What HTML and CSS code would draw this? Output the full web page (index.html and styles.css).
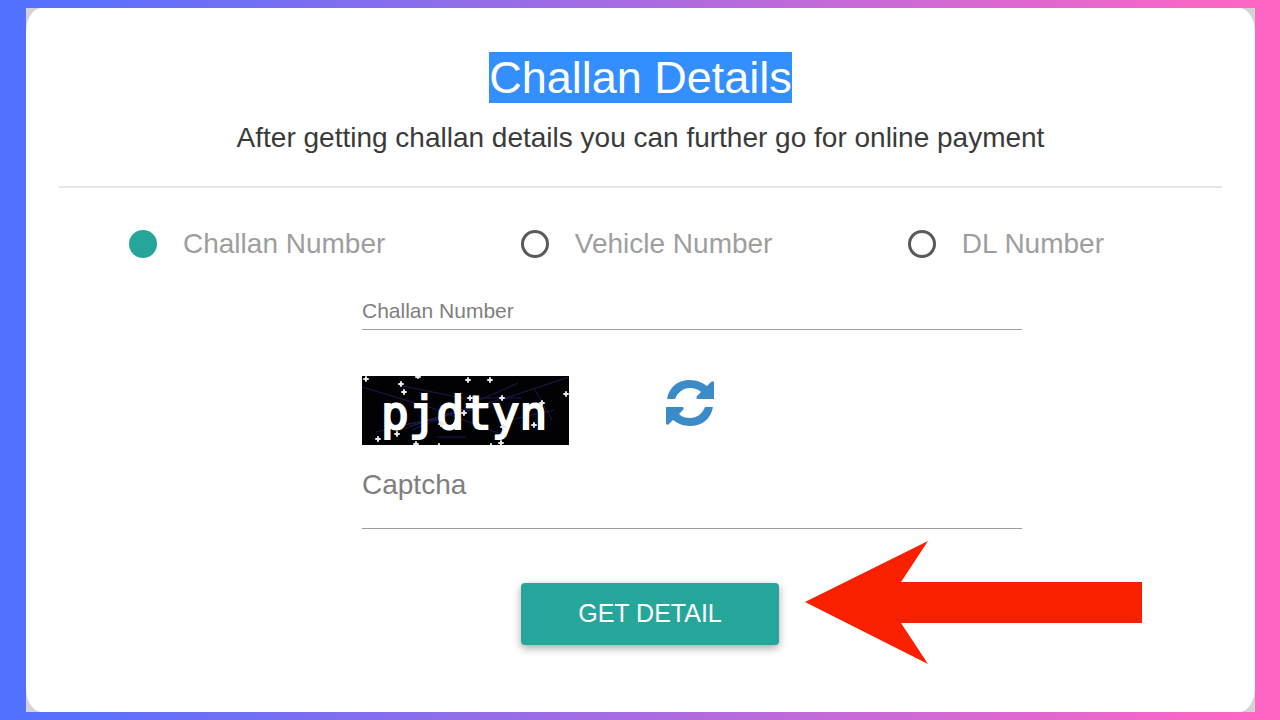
FILE: index.html
```
<!DOCTYPE html>
<html lang="en">
<head>
  <meta charset="UTF-8" />
  <meta name="viewport" content="width=device-width, initial-scale=1.0"/>
  <title>Challan Details</title>
  <link rel="stylesheet" href="styles.css">
</head>
<body>
  <div class="frame">
    <main class="card">
      <div class="header">
        <h1><span class="selected">Challan Details</span></h1>
        <p>After getting challan details you can further go for online payment</p>
      </div>

      <form>
        <div class="options">
          <label><input type="radio" name="searchBy" value="challan" checked> Challan Number</label>
          <label><input type="radio" name="searchBy" value="vehicle"> Vehicle Number</label>
          <label><input type="radio" name="searchBy" value="dl"> DL Number</label>
        </div>

        <div class="fields">
          <div class="field field-small">
            <input type="text" id="challanNumber">
            <label for="challanNumber">Challan Number</label>
          </div>

          <div class="captcha">
            <svg class="captcha-image" viewBox="0 0 207 69" role="img" aria-label="Captcha">
              <rect width="207" height="69" fill="#020204"/>
              <g stroke="#1b1b50" stroke-width="1" fill="none">
                <path d="M0 11L70 32L136 57M207 1L150 20L48 50M36 9L100 22L160 22M118 24L156 7M14 56L90 38L130 30M75 61H104M172 12L190 44M148 44L192 34M44 52L92 36M46 48L84 42M50 54L104 32"/>
              </g>
              <text class="captcha-text" x="19" y="53">pjdtyn</text>
              <path stroke="#e8e8e8" stroke-width="2" stroke-linecap="round" d="M4 1v4M2 3h4M56 0v2M54 1h4M39 6v4M37 8h4M42 14v4M40 16h4M106 2v4M104 4h4M128 2v4M126 4h4M204 16v4M202 18h4M108 20v4M106 22h4M140 20v4M138 22h4M102 35v4M100 37h4M180 25v4M178 27h4M79 46v4M77 48h4M141 49v4M139 51h4M172 47v4M170 49h4M35 56v4M33 58h4M16 61v4M14 63h4M54 66v3M52 68h4M77 68v1M139 65v4M137 67h4M129 68v1"/>
            </svg>
            <button type="button" class="refresh" aria-label="Refresh captcha">
              <svg viewBox="0 0 48 48" fill="#3c8bc9">
                <path d="M1 20C3 8 12 1 24 1C31 1 37 4 41 7L45 3C46 2 48 2 48 4V20H32C30 20 30 18 31 17L35 13C32 10 28 9 24 9C17 9 12 13 9 20Z"/>
                <path d="M47 28C45 40 36 47 24 47C17 47 11 44 7 41L3 45C2 46 0 46 0 44V28H16C18 28 18 30 17 31L13 35C16 38 20 39 24 39C31 39 36 35 39 28Z"/>
              </svg>
            </button>
          </div>

          <div class="field">
            <input type="text" id="captcha">
            <label for="captcha">Captcha</label>
          </div>
        </div>

        <div class="actions">
          <button type="submit" class="btn">GET DETAIL</button>
          <svg class="arrow" viewBox="0 0 337 123" aria-hidden="true">
            <path fill="#f92000" d="M0 61L123 0L96 41H337V82H96L123 123Z"/>
          </svg>
        </div>
      </form>
    </main>
  </div>
</body>
</html>
```
FILE: styles.css
```
* {
  box-sizing: border-box;
}
body {
  font-family: "Liberation Sans", Arial, sans-serif;
  font-size: 28px;
  line-height: 32px;
  margin: 0;
  min-height: 100vh;
  padding: 8px 25px 8px 26px;
  background: linear-gradient(90deg, #5371ff 2%, #ff66c4 98%);
  display: flex;
}
.frame {
  flex: 1;
  background: #d4d4d4;
  display: flex;
}
.card {
  flex: 1;
  background: white;
  border-radius: 16px / 24px;
  padding: 42px 33px 32px;
}
.header {
  text-align: center;
  color: #3a3a3a;
  border-bottom: 2px solid #e6e6e6;
  padding-bottom: 32px;
}
h1 {
  margin: 0;
  font-size: 45px;
  font-weight: 400;
  line-height: 56px;
}
.selected {
  background: #338fff;
  color: white;
}
p {
  margin: 16px 0 0;
}
.options {
  display: flex;
  justify-content: space-between;
  padding: 40px 118px 0 70px;
  color: #9e9e9e;
}
.options label {
  display: flex;
  align-items: center;
  gap: 26px;
}
.options input {
  appearance: none;
  width: 28px;
  height: 28px;
  margin: 0;
  border: 3px solid #5a5a5a;
  border-radius: 50%;
}
.options input:checked {
  border-color: #26a69a;
  background: #26a69a;
}
.fields {
  margin: 0 200px 0 303px;
}
.field {
  position: relative;
  color: #7f7f7f;
}
.field input {
  display: block;
  width: 100%;
  height: 84px;
  border: none;
  border-bottom: 1px solid #9e9e9e;
  background: transparent;
  font: inherit;
  outline: none;
}
.field label {
  position: absolute;
  left: 0;
  top: 24px;
}
.field-small input {
  height: 70px;
}
.field-small label {
  top: 35px;
  font-size: 21px;
}
.captcha {
  display: flex;
  align-items: flex-start;
  gap: 97px;
  padding-top: 46px;
}
.captcha-image {
  width: 207px;
  height: 69px;
}
.captcha-text {
  font-family: "DejaVu Sans Mono", monospace;
  font-size: 46px;
  fill: white;
  stroke: white;
  stroke-width: 2px;
}
.refresh {
  width: 48px;
  height: 48px;
  margin-top: 3px;
  padding: 0;
  border: none;
  background: none;
  cursor: pointer;
}
.refresh svg {
  display: block;
}
.actions {
  display: flex;
  align-items: flex-end;
  gap: 26px;
  padding: 12px 0 0 462px;
}
.btn {
  width: 258px;
  height: 62px;
  margin-bottom: 19px;
  padding: 0 0 2px;
  border: none;
  border-radius: 4px;
  background: #26a69a;
  color: white;
  font-family: inherit;
  font-size: 25px;
  box-shadow: 0 3px 8px rgba(0,0,0,0.35);
  cursor: pointer;
}
.arrow {
  width: 337px;
  height: 123px;
}
```
